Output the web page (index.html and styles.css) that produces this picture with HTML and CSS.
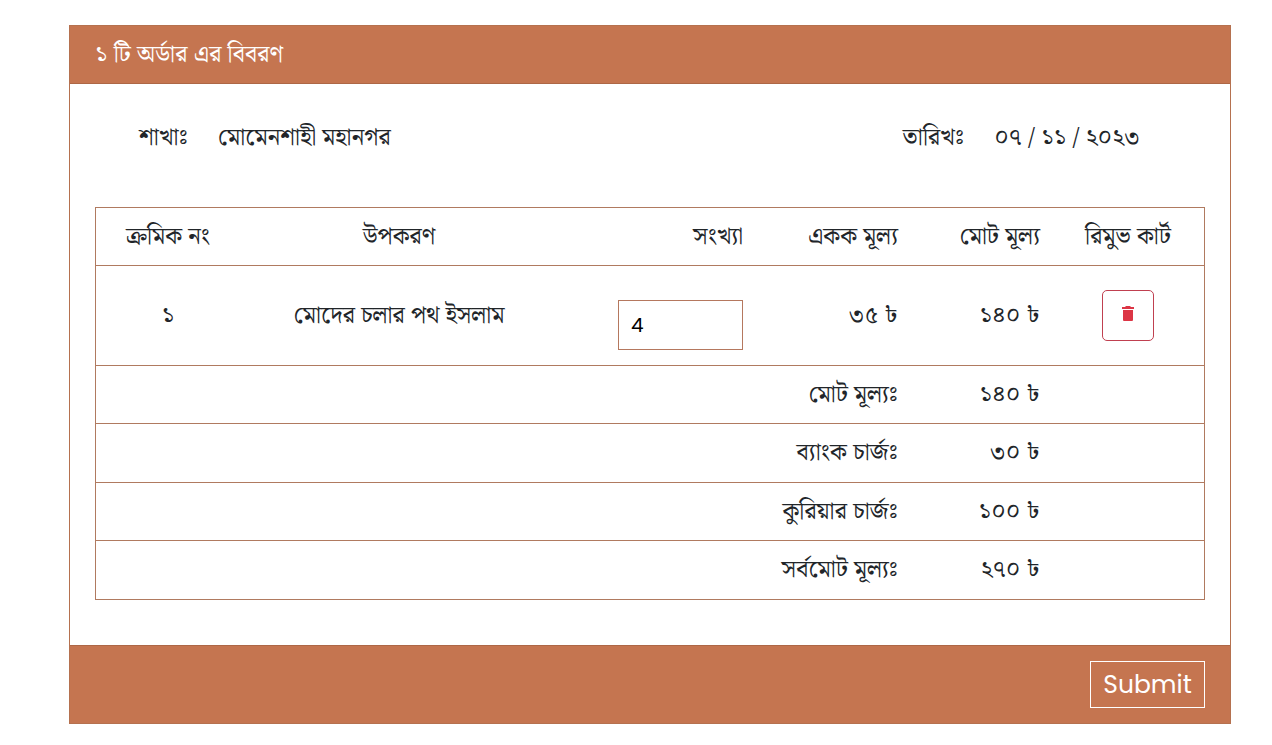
FILE: index.html
```html
<!DOCTYPE html>
<html lang="bn">
<head>
<meta charset="utf-8">
<meta name="viewport" content="width=device-width, initial-scale=1">
<title>অর্ডার এর বিবরণ</title>
<link rel="stylesheet" href="styles.css">
</head>
<body>
<main class="card">
  <header class="card-header"><h1 class="title">১ টি অর্ডার এর বিবরণ</h1></header>
  <form class="order">
    <div class="card-body">
      <div class="meta">
        <p class="meta-item"><span>শাখাঃ</span><span>মোমেনশাহী মহানগর</span></p>
        <p class="meta-item"><span>তারিখঃ</span><span>০৭ / ১১ / ২০২৩</span></p>
      </div>
      <table class="items">
        <colgroup><col class="c-no"><col class="c-name"><col class="c-qty"><col class="c-unit"><col class="c-total"><col class="c-remove"></colgroup>
        <thead>
          <tr><th class="mid">ক্রমিক নং</th><th class="mid">উপকরণ</th><th>সংখ্যা</th><th>একক মূল্য</th><th>মোট মূল্য</th><th class="mid">রিমুভ কার্ট</th></tr>
        </thead>
        <tbody>
          <tr class="item"><td class="mid">১</td><td class="mid">মোদের চলার পথ ইসলাম</td><td><input class="qty" type="text" value="4" aria-label="সংখ্যা"></td><td>৩৫ ৳</td><td>১৪০ ৳</td><td class="mid"><button class="remove" type="button" aria-label="রিমুভ কার্ট"><svg class="trash" viewBox="0 0 12 16" aria-hidden="true"><path fill="currentColor" d="M4 0h4l1 1h3v2H0V1h3zM1 4h10v10q0 1-1 1H2q-1 0-1-1z"/></svg></button></td></tr>
          <tr><td colspan="4">মোট মূল্যঃ</td><td>১৪০ ৳</td><td></td></tr>
          <tr class="charge"><td colspan="4">ব্যাংক চার্জঃ</td><td>৩০ ৳</td><td></td></tr>
          <tr><td colspan="4">কুরিয়ার চার্জঃ</td><td>১০০ ৳</td><td></td></tr>
          <tr><td colspan="4">সর্বমোট মূল্যঃ</td><td>২৭০ ৳</td><td></td></tr>
        </tbody>
      </table>
    </div>
    <footer class="card-footer"><button class="submit" type="submit">Submit</button></footer>
  </form>
</main>
</body>
</html>
```
FILE: styles.css
```css
* { box-sizing: border-box; }
body {
  margin: 0;
  padding: 25px 41px 21px 69px;
  background: #fff;
  color: #212529;
  font: 24px/36px "Noto Serif Bengali", "Lohit Bengali", FreeSerif, "Noto Sans Bengali", sans-serif;
}
.card { border: 1px solid #b5714f; }
.card-header { padding: 11px 25px 10px; background: #c57550; color: #fff; border-bottom: 1px solid #ad6746; }
.title { margin: 0; font-size: 24px; font-weight: 400; line-height: 36px; }
.card-body { padding: 36px 25px 45px; }
.meta { display: flex; justify-content: space-between; padding: 0 65px 0 44px; margin-bottom: 51px; }
.meta-item { display: flex; gap: 30px; margin: 0; }
.items { width: 100%; table-layout: fixed; border-collapse: separate; border-spacing: 0; border: 1px solid #b07a60; }
.items th, .items td { height: 58px; padding: 0 12px; font-weight: 400; text-align: right; white-space: nowrap; border-bottom: 1px solid #b07a60; }
.items .item td { height: 100px; }
.items .charge td { height: 59px; }
.items tbody tr:last-child td { border-bottom: 0; }
.items .mid { text-align: center; }
.c-no { width: 144px; }
.c-name { width: 318px; }
.c-unit { width: 155px; }
.c-total { width: 142px; }
.c-remove { width: 152px; }
.qty { display: block; width: 125px; height: 50px; margin: 19px 0 0 auto; padding: 0 12px; border: 1px solid #b5785e; border-radius: 0; color: #000; font: 20px/30px Poppins, "Noto Sans", sans-serif; }
.remove { display: inline-flex; align-items: center; justify-content: center; vertical-align: middle; width: 52px; height: 51px; padding: 0 0 4px; border: 1px solid #c04050; border-radius: 5px; background: #fff; color: #dc3545; }
.trash { width: 12px; height: 16px; }
.card-footer { display: flex; justify-content: flex-end; padding: 15px 25px; background: #c57550; border-top: 1px solid #ad6746; }
.submit { width: 115px; height: 47px; padding: 0; border: 1px solid #fff; background: transparent; color: #fff; font: 25px/36px Poppins, "Noto Sans", sans-serif; }
```
